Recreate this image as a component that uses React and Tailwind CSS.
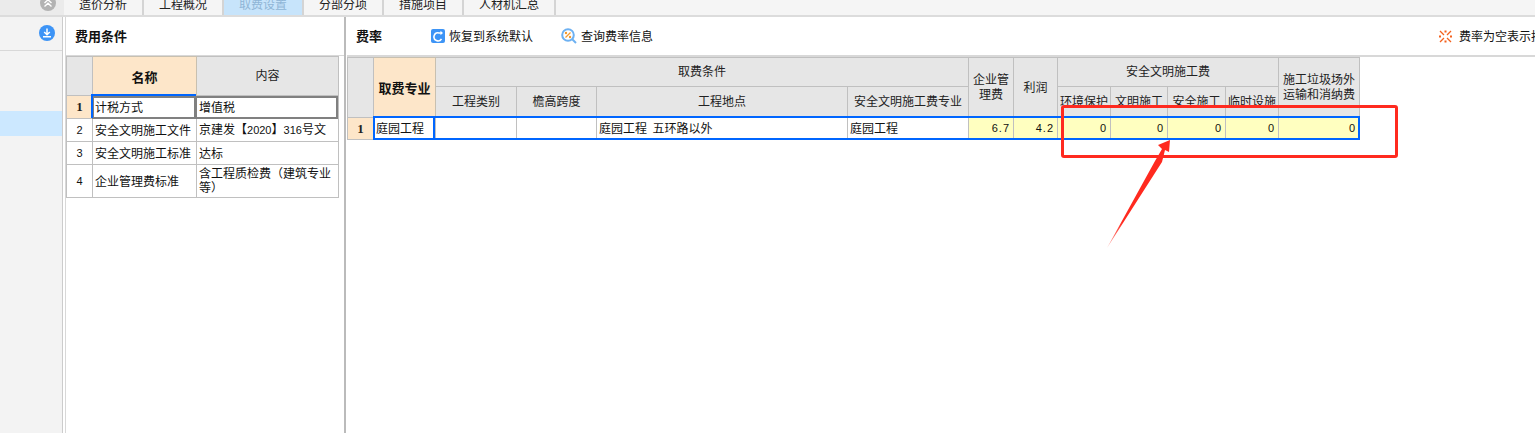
const cjk = { fontFamily: '"Noto Sans CJK SC","Liberation Sans",sans-serif' };

function N({ children }) {
  return <span className="font-['Liberation_Sans'] text-[11px]">{children}</span>;
}

function Tab({ label, active, wide }) {
  return (
    <div className={`flex h-full items-end justify-center border-r-2 border-[#d4d4d4] pb-[5px] ${wide ? 'w-[92px]' : 'w-[80px]'} ${active ? 'bg-[#c7e4fb] text-[#8fb5d6]' : 'bg-[#f5f5f5] text-[#222]'}`}>
      <span className="leading-[13px]">{label}</span>
    </div>
  );
}

function Th({ children, className = '', ...rest }) {
  return (
    <th {...rest} className={`border border-[#c0c0c0] bg-[#e6e6e6] px-0 pb-[3px] pt-0 text-center text-xs font-normal leading-[13px] text-[#222] ${className}`}>
      {children}
    </th>
  );
}

function Hot({ children, ...rest }) {
  return (
    <th {...rest} className="border border-[#c8c0b0] bg-[#fde6c9] p-0 text-center text-[13px] font-bold leading-[13px] text-[#111]">
      {children}
    </th>
  );
}

function Td({ children, className = '', ...rest }) {
  return (
    <td {...rest} className={`overflow-hidden border border-[#c0c0c0] px-[2px] pb-[2px] pt-0 text-xs leading-[13px] text-[#111] ${className}`}>
      {children}
    </td>
  );
}

function Num({ children }) {
  return (
    <td className="border border-[#c0c0c0] bg-[#ffffc0] py-0 pr-[3px] text-right font-['Liberation_Sans'] text-[11px] tracking-[1px] text-[#111]">
      {children}
    </td>
  );
}

function RowHead() {
  return (
    <td className="border border-[#c0c0c0] bg-[#fde6c9] p-0 text-center font-['Liberation_Serif'] text-[13px] font-bold text-[#222]">1</td>
  );
}

function LeftTable() {
  return (
    <div className="relative">
      <table className="w-[272px] table-fixed border-collapse">
        <colgroup>
          <col className="w-[26px]" />
          <col className="w-[104px]" />
          <col className="w-[142px]" />
        </colgroup>
        <tbody>
          <tr className="h-[39px]">
            <Th />
            <Hot>名称</Hot>
            <Th>内容</Th>
          </tr>
          <tr className="h-[23px]">
            <RowHead />
            <Td>计税方式</Td>
            <Td>增值税</Td>
          </tr>
          <tr className="h-[23px]">
            <Td className="text-center"><N>2</N></Td>
            <Td>安全文明施工文件</Td>
            <Td className="whitespace-nowrap">京建发【<N>2020</N>】<N>316</N>号文</Td>
          </tr>
          <tr className="h-[23px]">
            <Td className="text-center"><N>3</N></Td>
            <Td>安全文明施工标准</Td>
            <Td>达标</Td>
          </tr>
          <tr className="h-[33px]">
            <Td className="text-center"><N>4</N></Td>
            <Td>企业管理费标准</Td>
            <Td><div className="leading-[14px]">含工程质检费（建筑专业等）</div></Td>
          </tr>
        </tbody>
      </table>
      <div className="absolute left-[26px] top-[40px] h-[23px] w-[104px] border-[2px] border-[#808080]" />
      <div className="absolute left-[129px] top-[40px] h-[23px] w-[143px] border-[2px] border-[#808080]" />
      <div className="absolute left-[26px] top-[38px] h-[2px] w-[104px] bg-[#0066ff]" />
      <div className="absolute left-[25px] top-[38px] h-[24px] w-[2px] bg-[#0066ff]" />
    </div>
  );
}

function RightTable() {
  return (
    <div className="relative">
      <table className="w-[1012px] table-fixed border-collapse">
        <colgroup>
          <col className="w-[26px]" />
          <col className="w-[62px]" />
          <col className="w-[81px]" />
          <col className="w-[80px]" />
          <col className="w-[251px]" />
          <col className="w-[121px]" />
          <col className="w-[45px]" />
          <col className="w-[44px]" />
          <col className="w-[53px]" />
          <col className="w-[57px]" />
          <col className="w-[58px]" />
          <col className="w-[53px]" />
          <col className="w-[81px]" />
        </colgroup>
        <tbody>
          <tr className="h-[29px]">
            <Th rowSpan={2} />
            <Hot rowSpan={2}>取费专业</Hot>
            <Th colSpan={4}>取费条件</Th>
            <Th rowSpan={2}><div className="leading-[15px]">企业管<br />理费</div></Th>
            <Th rowSpan={2}>利润</Th>
            <Th colSpan={4}>安全文明施工费</Th>
            <Th rowSpan={2}><div className="leading-[15px]">施工垃圾场外<br />运输和消纳费</div></Th>
          </tr>
          <tr className="h-[31px]">
            <Th>工程类别</Th>
            <Th>檐高跨度</Th>
            <Th>工程地点</Th>
            <Th>安全文明施工费专业</Th>
            <Th className="whitespace-nowrap">环境保护</Th>
            <Th className="whitespace-nowrap">文明施工</Th>
            <Th className="whitespace-nowrap">安全施工</Th>
            <Th className="whitespace-nowrap">临时设施</Th>
          </tr>
          <tr className="h-[22px]">
            <RowHead />
            <Td>庭园工程</Td>
            <Td />
            <Td />
            <Td>庭园工程&nbsp;&nbsp;五环路以外</Td>
            <Td>庭园工程</Td>
            <Num>6.7</Num>
            <Num>4.2</Num>
            <Num>0</Num>
            <Num>0</Num>
            <Num>0</Num>
            <Num>0</Num>
            <Num>0</Num>
          </tr>
        </tbody>
      </table>
      <div className="absolute left-[26px] top-[59px] h-[24px] w-[987px] border-[2px] border-[#0066ff]" />
      <div className="absolute left-[26px] top-[59px] h-[24px] w-[62px] border-[2px] border-[#0066ff]" />
    </div>
  );
}

export default function App() {
  return (
    <div style={cjk} className="relative flex h-[433px] w-[1535px] flex-col overflow-hidden bg-white text-xs">
      <div className="flex h-[17px] shrink-0 border-b-2 border-[#dcdcdc] bg-[#f5f5f5]">
        <div className="relative h-full w-[64px] overflow-hidden bg-[#ebebeb]">
          <svg className="absolute left-[40px] top-[-5px]" width="16" height="16" viewBox="0 0 16 16">
            <circle cx="8" cy="8" r="8" fill="#b3b3b3" />
            <path d="M4.500 8 8 4.800 11.500 8M4.500 11.500 8 8.300l3.500 3.200" fill="none" stroke="#fff" strokeWidth="1.400" />
          </svg>
        </div>
        <Tab label="造价分析" />
        <Tab label="工程概况" />
        <Tab label="取费设置" active />
        <Tab label="分部分项" />
        <Tab label="措施项目" />
        <Tab label="人材机汇总" wide />
      </div>

      <div className="flex min-h-0 flex-1">
        <aside className="flex w-[63px] shrink-0 flex-col border-r border-[#cccccc] bg-[#f3f3f3]">
          <div className="flex h-[34px] items-center justify-end border-b border-[#d8d8d8] pb-[1px] pr-[7px]">
            <svg width="16" height="16" viewBox="0 0 16 16">
              <circle cx="8" cy="8" r="8" fill="#3d94f6" />
              <path d="M8 3.500V9.500M5.200 7 8 9.800 10.800 7M4 11.800h8" fill="none" stroke="#fff" strokeWidth="1.500" />
            </svg>
          </div>
          <div className="mt-[60px] h-[25px] bg-[#cce8ff]" />
        </aside>

        <section className="ml-[2px] flex w-[281px] shrink-0 flex-col border-x border-[#d8d8d8] border-r-2 border-r-[#bbbbbb]">
          <div className="flex h-[39px] shrink-0 items-center border-b border-[#d8d8d8] pl-[9px] text-[13px] font-bold text-[#111]">
            费用条件
          </div>
          <LeftTable />
        </section>

        <section className="ml-px flex min-w-0 flex-1 flex-col">
          <div className="flex h-[40px] shrink-0 items-center border-b-2 border-[#d8d8d8] pl-[9px] text-[#111]">
            <span className="w-[75px] text-[13px] font-bold text-[#111]">费率</span>
            <svg width="14" height="14" viewBox="0 0 14 14" className="mr-[4px]">
              <rect width="14" height="14" rx="2" fill="#3d94f6" />
              <path d="M10.500 9.800A4 4 0 1 1 8 4H11" fill="none" stroke="#fff" strokeWidth="1.600" />
              <path d="M9.500 1.800 12 4 9.500 6.200z" fill="#fff" />
            </svg>
            <span className="w-[112px]">恢复到系统默认</span>
            <svg width="16" height="16" viewBox="0 0 16 16" className="mr-[4px]">
              <circle cx="7" cy="7" r="5.800" fill="#fff" stroke="#6db1f2" strokeWidth="2" />
              <path d="M11 11l4 4" stroke="#6db1f2" strokeWidth="2" />
              <path d="M9.500 4.500 4.500 9.500" stroke="#f29a2e" strokeWidth="1.300" />
              <circle cx="5" cy="5" r="1.200" fill="#f29a2e" />
              <circle cx="9" cy="9" r="1.200" fill="#f29a2e" />
            </svg>
            <span>查询费率信息</span>
            <div className="ml-auto flex shrink-0 items-center whitespace-nowrap">
              <svg width="13" height="13" viewBox="0 0 13 13" className="mr-[7px]">
                <path d="M1 1l4 4M12 1 8 5M1 12l4-4M12 12 8 8" stroke="#f4611c" strokeWidth="1.300" />
                <path d="M5.500 0.500h2v2h-2zM5.500 10.500h2v2h-2zM0 5.500h2v2H0zM11 5.500h2v2h-2z" fill="#f4611c" />
              </svg>
              <span className="mr-[-12px] w-[88px] overflow-hidden">费率为空表示按</span>
            </div>
          </div>
          <RightTable />
        </section>
      </div>

      <div className="pointer-events-none absolute left-[1061px] top-[105px] h-[53px] w-[337px] rounded-[3px] border-[3px] border-[#ff2a1f]" />
      <svg className="pointer-events-none absolute left-[1100px] top-[130px]" width="90" height="125" viewBox="0 0 90 125">
        <defs>
          <linearGradient id="arrowTail" x1="7" y1="118" x2="22" y2="92" gradientUnits="userSpaceOnUse">
            <stop offset="0" stopColor="#ff2a1f" stopOpacity="0.4" />
            <stop offset="1" stopColor="#ff2a1f" />
          </linearGradient>
        </defs>
        <path d="M7 118 55 31 62 19 58 15 70 10 69 22 65 20 62 32z" fill="url(#arrowTail)" />
      </svg>
    </div>
  );
}
